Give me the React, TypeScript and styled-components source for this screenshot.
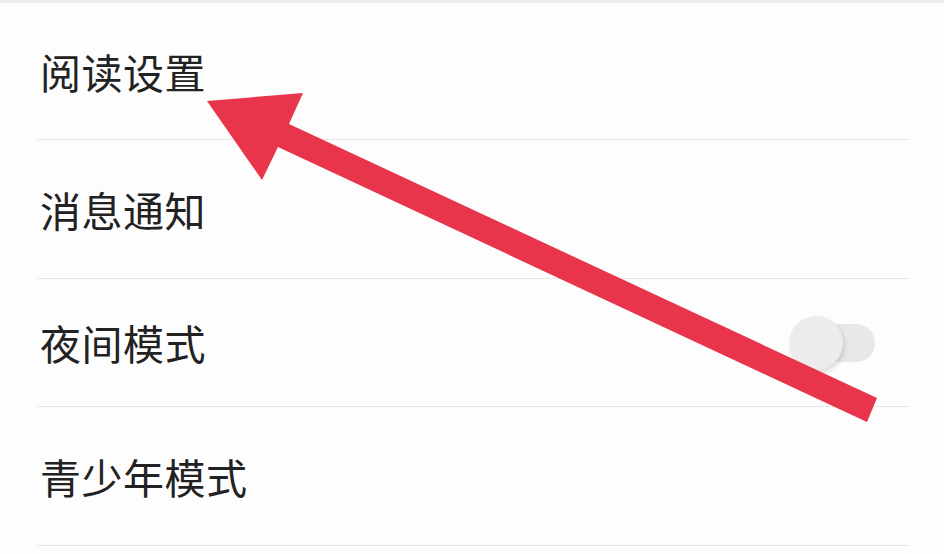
import styled, { createGlobalStyle } from 'styled-components'

const GlobalStyle = createGlobalStyle`
  html, body {
    margin: 0;
    padding: 0;
    background: #fdfdfd;
  }
  body {
    font-family: 'Noto Sans CJK SC', 'Noto Sans', sans-serif;
  }
`

const Page = styled.div`
  position: relative;
  width: 944px;
  height: 554px;
  overflow: hidden;
  background: #fdfdfd;
  border-top: 3px solid #eeeeee;
  box-sizing: border-box;
`

const List = styled.ul`
  list-style: none;
  margin: 0;
  padding: 0 34px 0 37px;
`

const Row = styled.li<{ $height: number }>`
  display: flex;
  align-items: center;
  justify-content: space-between;
  height: ${(p) => p.$height}px;
  padding: 0 35px 0 3px;
  border-bottom: 1px solid #e7e7e7;
`

const Label = styled.span`
  font-size: 41px;
  line-height: 1;
  color: #222222;
  letter-spacing: 0.5px;
`

const Switch = styled.div`
  position: relative;
  width: 86px;
  height: 56px;
  display: flex;
  align-items: center;
  justify-content: flex-end;
`

const Track = styled.div`
  width: 72px;
  height: 38px;
  border-radius: 19px;
  background: #e8e8e8;
`

const Thumb = styled.div`
  position: absolute;
  left: 0;
  top: 1px;
  width: 54px;
  height: 54px;
  border-radius: 50%;
  background: #ececec;
  box-shadow: 2px 3px 4px rgba(0, 0, 0, 0.12);
`

const Pointer = styled.svg`
  position: absolute;
  left: 0;
  top: -3px;
  pointer-events: none;
`

const rows = [
  { label: '阅读设置', height: 136 },
  { label: '消息通知', height: 138 },
  { label: '夜间模式', height: 127, toggle: true },
  { label: '青少年模式', height: 138 },
]

export default function App() {
  return (
    <>
      <GlobalStyle />
      <Page>
        <List>
          {rows.map((r) => (
            <Row key={r.label} $height={r.height}>
              <Label>{r.label}</Label>
              {r.toggle && (
                <Switch>
                  <Track />
                  <Thumb />
                </Switch>
              )}
            </Row>
          ))}
        </List>
        <Pointer width="944" height="554" viewBox="0 0 944 554">
          <polygon
            points="207,101 303,93 289,124 877,398 867,422 278,147 262,180"
            fill="#e8354b"
          />
        </Pointer>
      </Page>
    </>
  )
}
